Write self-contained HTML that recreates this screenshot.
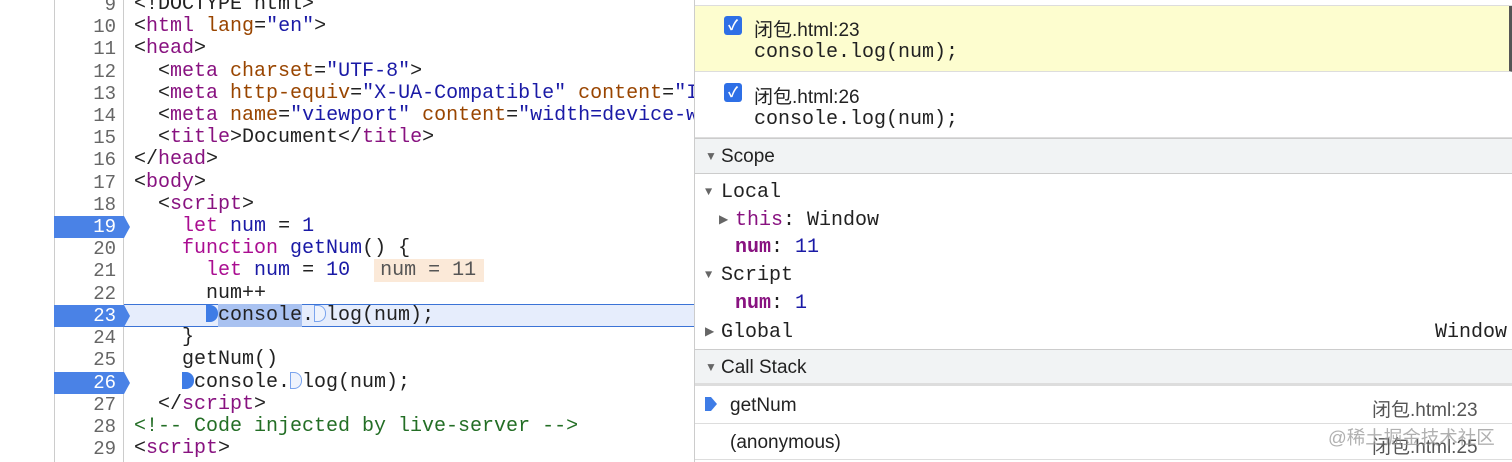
<!DOCTYPE html>
<html><head><meta charset="utf-8"><style>
*{margin:0;padding:0;box-sizing:border-box}
body{width:1512px;height:462px;overflow:hidden;background:#fff;position:relative;font-family:"Liberation Mono","DejaVu Sans Mono",monospace}
.lp{position:absolute;left:0;top:0;width:694px;height:462px;overflow:hidden}
.gut{position:absolute;left:54px;top:0;width:70px;height:462px;border-left:1px solid #ccc;border-right:1px solid #ccc;background:#fff}
.ln{position:absolute;left:54px;width:70px;height:22px;text-align:right;padding-right:8px;font-size:19px;line-height:22px;color:#666}
.bp{background:#4a82e6;color:#fff}
.bp:after{content:"";position:absolute;right:-6px;top:0;border-left:6px solid #4a82e6;border-top:11px solid transparent;border-bottom:11px solid transparent}
.cl{position:absolute;left:134px;height:22px;font-size:20px;line-height:22px;white-space:pre;color:#222}
.t{color:#881280}.a{color:#994500}.v{color:#1a1aa6}.k{color:#aa0d91}.c{color:#236e25}
.cur{position:absolute;left:124px;top:304px;width:571px;height:23px;background:#e6edfc;border-top:1.5px solid #3b73d6;border-bottom:1.5px solid #3b73d6}
.mk{display:inline-block;width:12px;height:17px;vertical-align:-2px;border-radius:0 8px 8px 0}
.mf{background:#3e7ce6}.me{border:1.5px solid #7aa4ee;background:#eef3fd}
.rp{position:absolute;left:694px;top:0;width:818px;height:462px;border-left:1px solid #ccc;font-family:"Liberation Sans","Noto Sans CJK SC",sans-serif}
.row{position:absolute;left:0;width:818px}
.cb{position:absolute;left:29px;width:18px;height:19px;background:#2e6fe6;border-radius:3px;color:#fff;font-size:14px;line-height:19px;text-align:center;font-weight:bold}
.ui{font-size:19px;color:#222;position:absolute}
.mono{font-family:"Liberation Mono",monospace;font-size:20px;color:#222;position:absolute;white-space:pre}
.hdr{background:#f1f3f4;border-top:1px solid #ccc;border-bottom:1px solid #ccc}
.tri{color:#666;font-size:12px;display:inline-block;width:16px;vertical-align:2px}
.p{color:#881280;font-weight:bold}
</style></head><body>
<div class="lp">
<div class="gut"></div>
<div class="cur"></div>
<div class="ln" style="top:-6px">9</div><div class="cl" style="top:-6px">&lt;!DOCTYPE html&gt;</div>
<div class="ln" style="top:16px">10</div><div class="cl" style="top:16px">&lt;<span class="t">html</span> <span class="a">lang</span>=<span class="v">"en"</span>&gt;</div>
<div class="ln" style="top:38px">11</div><div class="cl" style="top:38px">&lt;<span class="t">head</span>&gt;</div>
<div class="ln" style="top:61px">12</div><div class="cl" style="top:61px">  &lt;<span class="t">meta</span> <span class="a">charset</span>=<span class="v">"UTF-8"</span>&gt;</div>
<div class="ln" style="top:83px">13</div><div class="cl" style="top:83px">  &lt;<span class="t">meta</span> <span class="a">http-equiv</span>=<span class="v">"X-UA-Compatible"</span> <span class="a">content</span>=<span class="v">"IE=edge"</span></div>
<div class="ln" style="top:105px">14</div><div class="cl" style="top:105px">  &lt;<span class="t">meta</span> <span class="a">name</span>=<span class="v">"viewport"</span> <span class="a">content</span>=<span class="v">"width=device-width</span></div>
<div class="ln" style="top:127px">15</div><div class="cl" style="top:127px">  &lt;<span class="t">title</span>&gt;Document&lt;/<span class="t">title</span>&gt;</div>
<div class="ln" style="top:149px">16</div><div class="cl" style="top:149px">&lt;/<span class="t">head</span>&gt;</div>
<div class="ln" style="top:172px">17</div><div class="cl" style="top:172px">&lt;<span class="t">body</span>&gt;</div>
<div class="ln" style="top:194px">18</div><div class="cl" style="top:194px">  &lt;<span class="t">script</span>&gt;</div>
<div class="ln bp" style="top:216px">19</div><div class="cl" style="top:216px">    <span class="k">let</span> <span class="v">num</span> = <span class="v">1</span></div>
<div class="ln" style="top:238px">20</div><div class="cl" style="top:238px">    <span class="k">function</span> <span class="v">getNum</span>() {</div>
<div class="ln" style="top:260px">21</div><div class="cl" style="top:260px">      <span class="k">let</span> <span class="v">num</span> = <span class="v">10</span>  <span style="background:#fbe9d8;color:#555;padding:0 8px 0 6px">num = 11</span></div>
<div class="ln" style="top:283px">22</div><div class="cl" style="top:283px">      num++</div>
<div class="ln bp" style="top:305px">23</div><div class="cl" style="top:305px">      <span class="mk mf"></span><span style="background:#a9c2f1">console</span>.<span class="mk me"></span>log(num);</div>
<div class="ln" style="top:327px">24</div><div class="cl" style="top:327px">    }</div>
<div class="ln" style="top:349px">25</div><div class="cl" style="top:349px">    getNum()</div>
<div class="ln bp" style="top:372px">26</div><div class="cl" style="top:372px">    <span class="mk mf"></span>console.<span class="mk me"></span>log(num);</div>
<div class="ln" style="top:394px">27</div><div class="cl" style="top:394px">  &lt;/<span class="t">script</span>&gt;</div>
<div class="ln" style="top:416px">28</div><div class="cl c" style="top:416px">&lt;!-- Code injected by live-server --&gt;</div>
<div class="ln" style="top:438px">29</div><div class="cl" style="top:438px">&lt;<span class="t">script</span>&gt;</div>
</div>

<div class="rp">
<div class="row" style="top:0;height:6px;border-bottom:1px solid #ddd"></div>
<div class="row" style="top:6px;height:66px;background:#fdfdcf;border-bottom:1px solid #ddd;border-right:4px solid #555"></div>
<div class="cb" style="top:16px">✓</div><div class="ui" style="left:59px;top:15px">闭包.html:23</div>
<div class="mono" style="left:59px;top:41px">console.log(num);</div>
<div class="row" style="top:72px;height:66px;border-bottom:1px solid #ddd"></div>
<div class="cb" style="top:83px">✓</div><div class="ui" style="left:59px;top:82px">闭包.html:26</div>
<div class="mono" style="left:59px;top:108px">console.log(num);</div>
<div class="row hdr" style="top:138px;height:36px"></div>
<div class="ui" style="left:10px;top:146px"><span class="tri">▼</span>Scope</div>
<div class="mono" style="left:10px;top:181px"><span class="tri">▼</span>Local</div>
<div class="mono" style="left:24px;top:209px"><span class="tri">▶</span><span style="color:#881280">this</span>: Window</div>
<div class="mono" style="left:40px;top:236px"><span class="p">num</span>: <span class="v">11</span></div>
<div class="mono" style="left:10px;top:264px"><span class="tri">▼</span>Script</div>
<div class="mono" style="left:40px;top:292px"><span class="p">num</span>: <span class="v">1</span></div>
<div class="mono" style="left:10px;top:321px"><span class="tri">▶</span>Global</div>
<div class="mono" style="left:740px;top:321px">Window</div>
<div class="row hdr" style="top:349px;height:37px;border-bottom:3px solid #ddd"></div>
<div class="ui" style="left:10px;top:357px"><span class="tri">▼</span>Call Stack</div>
<div class="row" style="top:386px;height:38px;border-bottom:1px solid #ddd"></div>
<svg style="position:absolute;left:9px;top:396px" width="14" height="16" viewBox="0 0 14 16"><path d="M1 1 H7 L13 8 L7 15 H1 Z" fill="#3e7ce6"/></svg>
<div class="ui" style="left:35px;top:395px">getNum</div>
<div class="ui" style="left:677px;top:395px;color:#555">闭包.html:23</div>
<div class="row" style="top:424px;height:36px;border-bottom:1px solid #ddd"></div>
<div class="ui" style="left:35px;top:432px">(anonymous)</div>
<div class="ui" style="left:677px;top:432px;color:#555">闭包.html:25</div>
<div class="ui" style="left:633px;top:424px;color:rgba(150,150,150,.75);font-size:18.5px">@稀土掘金技术社区</div>
</div>
</body></html>
